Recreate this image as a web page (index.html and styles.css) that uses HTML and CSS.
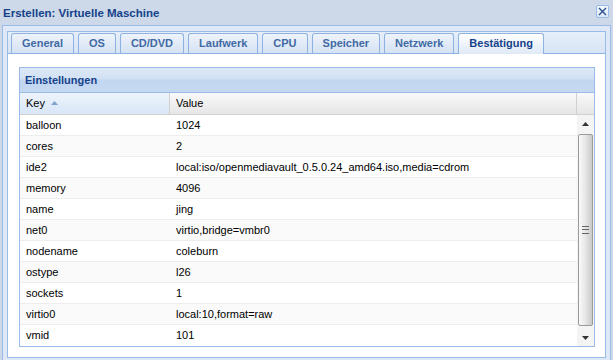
FILE: index.html
```html
<!DOCTYPE html>
<html lang="de">
<head>
    <meta charset="UTF-8">
    <title>Erstellen: Virtuelle Maschine</title>
    <link rel="stylesheet" href="styles.css">
</head>
<body>
    <div class="window">
        <div class="win-header">
            <span class="win-title">Erstellen: Virtuelle Maschine</span>
            <span class="win-close">
                <svg width="11" height="11" viewBox="0 0 11 11"><path d="M2 2 L9 9 M9 2 L2 9" stroke="#2b4f8c" stroke-width="1.4"/></svg>
            </span>
        </div>

        <div class="win-body">
            <div class="tab-strip">
                <div class="tab">General</div>
                <div class="tab">OS</div>
                <div class="tab">CD/DVD</div>
                <div class="tab">Laufwerk</div>
                <div class="tab">CPU</div>
                <div class="tab">Speicher</div>
                <div class="tab">Netzwerk</div>
                <div class="tab active">Bestätigung</div>
            </div>

            <div class="tab-body">
                <div class="grid-panel">
                    <div class="grid-title">Einstellungen</div>
                    <div class="grid-head">
                        <div class="col-key sorted">Key
                            <svg class="sort-icon" width="7" height="4" viewBox="0 0 7 4"><polygon points="0,4 7,4 3.5,0" fill="#7da2ce"/></svg>
                        </div>
                        <div class="col-value">Value</div>
                        <div class="col-filler"></div>
                    </div>
                    <div class="grid-body">
                        <div class="rows" id="rows"></div>
                        <div class="scrollbar">
                            <div class="sb-btn"><svg width="7" height="4" viewBox="0 0 7 4"><polygon points="0,4 7,4 3.5,0" fill="#333"/></svg></div>
                            <div class="sb-track">
                                <div class="sb-thumb"><span class="grip"></span></div>
                            </div>
                            <div class="sb-btn"><svg width="7" height="4" viewBox="0 0 7 4"><polygon points="0,0 7,0 3.5,4" fill="#333"/></svg></div>
                        </div>
                    </div>
                </div>
            </div>
        </div>
    </div>

    <script>
        // VM config summary
        var config = [
            ['balloon', '1024'],
            ['cores', '2'],
            ['ide2', 'local:iso/openmediavault_0.5.0.24_amd64.iso,media=cdrom'],
            ['memory', '4096'],
            ['name', 'jing'],
            ['net0', 'virtio,bridge=vmbr0'],
            ['nodename', 'coleburn'],
            ['ostype', 'l26'],
            ['sockets', '1'],
            ['virtio0', 'local:10,format=raw'],
            ['vmid', '101']
        ];

        var rows = document.getElementById('rows');
        config.forEach(function(item, i) {
            var row = document.createElement('div');
            row.className = 'row' + (i % 2 ? ' alt' : '');
            var k = document.createElement('div');
            k.className = 'cell';
            k.textContent = item[0];
            var v = document.createElement('div');
            v.className = 'cell';
            v.textContent = item[1];
            row.appendChild(k);
            row.appendChild(v);
            rows.appendChild(row);
        });
    </script>
</body>
</html>
```

FILE: styles.css
```css
body { margin: 0; font-family: "Liberation Sans", Arial, sans-serif; font-size: 11px; color: #000; }
.window { width: 613px; height: 360px; overflow: hidden; background: #cdd9e8; }

.win-header { height: 25px; display: flex; align-items: center; justify-content: space-between; padding: 0 3px 0 3px; box-sizing: border-box; }
.win-title { font-weight: bold; color: #15428b; font-size: 11.5px; }
.win-close { width: 13px; height: 13px; box-sizing: border-box; border: 1px solid #99bbe8; border-radius: 2px; background: linear-gradient(#f4f8fd, #dce7f5); display: flex; align-items: center; justify-content: center; margin-top: -2px; margin-right: 1px; }

.win-body { margin: 0 2px; height: 340px; border: 1px solid #99bbe8; border-bottom: none; background: #dfe8f6; padding: 5px 4px 0 4px; }

.tab-strip { height: 21px; display: flex; align-items: flex-end; gap: 4px; padding-left: 3px; border: 1px solid #99bbe8; border-bottom-color: #8db2e3; background: linear-gradient(#e6eef9, #d7e4f4); }
.tab { height: 19px; line-height: 19px; padding: 0 10px; border: 1px solid #8db2e3; border-bottom: none; border-radius: 3px 3px 0 0; background: linear-gradient(#eef3fb, #d5e2f3); color: #416aa3; font-weight: bold; }
.tab.active { height: 20px; margin-bottom: -1px; background: linear-gradient(#ffffff, #dfe9f6); color: #15428b; }

.tab-body { background: #fff; border: 1px solid #99bbe8; border-top: none; padding: 13px 10px 10px 11px; }

.grid-panel { border: 1px solid #99bbe8; }
.grid-title { height: 24px; line-height: 24px; padding-left: 5px; font-weight: bold; color: #15428b; background: linear-gradient(#dce8f6 0%, #d2e1f3 45%, #c2d6f0 50%, #c6d9f1 100%); border-bottom: 1px solid #99bbe8; }

.grid-head { display: flex; height: 21px; border-bottom: 1px solid #d0d0d0; background: linear-gradient(#f9f9f9, #e6e6e6); }
.grid-head > div { line-height: 21px; padding-left: 6px; box-sizing: border-box; border-right: 1px solid #d0d0d0; }
.col-key { width: 150px; }
.col-key.sorted { background: linear-gradient(#eef4fc, #d8e6f7); }
.col-value { width: 407px; }
.col-filler { width: 17px; border-right: none !important; }
.sort-icon { margin-left: 3px; vertical-align: 2px; }

.grid-body { display: flex; }
.rows { flex: 1; }
.row { display: flex; height: 21px; box-sizing: border-box; border-bottom: 1px solid #ededed; }
.row:last-child { border-bottom: none; }
.row.alt { background: #fafafa; }
.cell { line-height: 20px; padding-left: 6px; box-sizing: border-box; white-space: nowrap; }
.cell:first-child { width: 150px; }

.scrollbar { width: 17px; display: flex; flex-direction: column; background: #f4f4f4; }
.sb-btn { height: 17px; display: flex; align-items: center; justify-content: center; }
.sb-track { flex: 1; padding: 2px 1px; }
.sb-thumb { height: 192px; box-sizing: border-box; border: 1px solid #9a9a9a; border-radius: 2px; background: linear-gradient(to right, #fafafa, #e6e6e6 50%, #c9c9c9); display: flex; align-items: center; justify-content: center; }
.grip { width: 7px; height: 6px; border-top: 1px solid #666; border-bottom: 1px solid #666; background: linear-gradient(transparent 2px, #666 2px, #666 3px, transparent 3px); }
```
